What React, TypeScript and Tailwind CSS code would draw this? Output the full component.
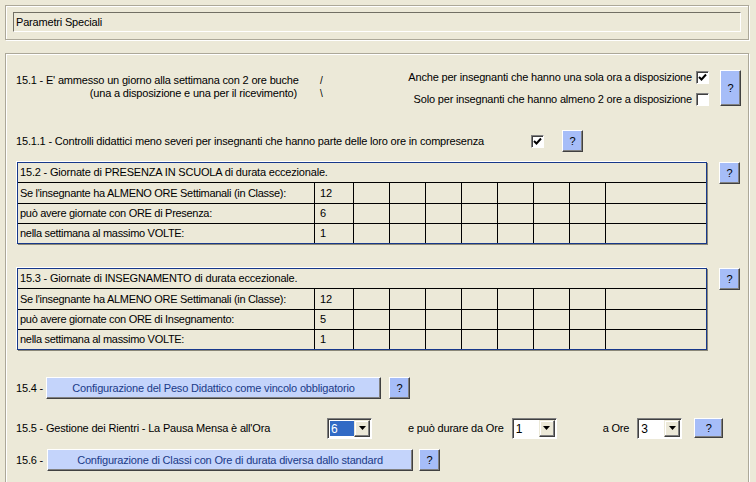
import React from 'react';

const FONT = { fontFamily: '"Liberation Sans", Arial, sans-serif' };

function HelpButton({ className = '' }: { className?: string }) {
  return (
    <div
      className={`flex items-center justify-center border border-t-white border-l-white border-r-[#404040] border-b-[#404040] bg-[#a6bdf8] text-[11px] text-black shadow-[inset_-1px_-1px_0_#808080] ${className}`}
    >
      ?
    </div>
  );
}

function CheckBox({ checked }: { checked?: boolean }) {
  return (
    <div className="flex h-[13px] w-[13px] shrink-0 items-center justify-center border border-t-[#808080] border-l-[#808080] border-r-white border-b-white bg-white shadow-[inset_1px_1px_0_#404040]">
      {checked && (
        <svg width="9" height="9" viewBox="0 0 9 9">
          <path d="M1 4 L3.5 6.5 L8 1.5" stroke="#000" strokeWidth="2" fill="none" />
        </svg>
      )}
    </div>
  );
}

function Combo({ value, selected, className = '' }: { value: string; selected?: boolean; className?: string }) {
  return (
    <div
      className={`flex h-[21px] border border-t-[#808080] border-l-[#808080] border-r-white border-b-white bg-white shadow-[inset_1px_1px_0_#404040] ${className}`}
    >
      <div className="flex flex-1 items-center pl-[2px] pt-[1px]">
        <span
          className={`flex h-[15px] items-center px-[1px] text-[12px] leading-none ${
            selected ? 'w-full bg-[#316ac5] text-white' : 'text-black'
          }`}
        >
          {value}
        </span>
      </div>
      <div className="my-[1px] mr-[1px] flex w-[16px] items-center justify-center border border-t-[#ece9d8] border-l-[#ece9d8] border-r-[#404040] border-b-[#404040] bg-[#ece9d8] shadow-[inset_-1px_-1px_0_#808080,inset_1px_1px_0_#fff]">
        <svg width="7" height="4" viewBox="0 0 7 4">
          <path d="M0 0 H7 L3.5 4 Z" fill="#000" />
        </svg>
      </div>
    </div>
  );
}

function BigButton({ label, className = '' }: { label: string; className?: string }) {
  return (
    <div
      className={`flex h-[22px] items-center justify-center whitespace-nowrap border border-t-white border-l-white border-r-[#404040] border-b-[#404040] bg-[#c4d4fb] text-[11px] text-[#1a3a88] shadow-[inset_-1px_-1px_0_#808080] ${className}`}
    >
      {label}
    </div>
  );
}

const CELLS = [0, 1, 2, 3, 4, 5, 6];

function ExceptionTable({ title, rows }: { title: string; rows: [string, string][] }) {
  return (
    <div className="flex items-start">
      <div className="ml-[1px] w-[690px] border border-[#17388a] shadow-[-1px_-1px_0_#fff,1px_1px_0_#8a8778]">
        <div className="flex h-[20px] items-center border-b border-black pl-[2px]">{title}</div>
        {rows.map(([label, value], i) => (
          <div key={i} className={`flex h-[20px] ${i > 0 ? 'border-t border-black' : ''}`}>
            <div className="flex w-[297px] items-center border-r border-black pl-[2px] tracking-[-0.3px]">{label}</div>
            <div className="flex w-[39px] items-center border-r border-black pl-[5px]">{value}</div>
            {CELLS.map((c) => (
              <div key={c} className="w-[36px] border-r border-black" />
            ))}
            <div className="flex-1" />
          </div>
        ))}
      </div>
      <HelpButton className="ml-[12px] h-[22px] w-[21px]" />
    </div>
  );
}

export default function App() {
  return (
    <div
      className="h-[482px] w-[756px] overflow-hidden whitespace-nowrap bg-[#ece9d8] pt-[5px] text-[11px] tracking-[-0.18px] text-black"
      style={FONT}
    >
      {/* Header panel */}
      <div className="mx-[5px] h-[35px] w-[744px] border border-[#aca899] pl-[7px] pt-[6px] shadow-[inset_1px_1px_0_#fff,1px_1px_0_#fff]">
        <div className="flex h-[20px] w-[728px] items-center border border-t-[#716f64] border-l-[#716f64] border-r-white border-b-white pl-[2px]">
          Parametri Speciali
        </div>
      </div>

      {/* Main panel */}
      <div className="mx-[5px] mt-[13px] h-[440px] w-[744px] border border-[#aca899] pl-[10px] pt-[16px] shadow-[inset_1px_1px_0_#fff,1px_1px_0_#fff]">
        {/* 15.1 */}
        <div className="flex h-[36px] items-start">
          <div className="mt-[4px] w-[281px] text-right leading-[13px]">
            <div>15.1 - E' ammesso un giorno alla settimana con 2 ore buche</div>
            <div>(una a disposizione e una per il ricevimento)</div>
          </div>
          <div className="ml-[23px] mt-[4px] text-[10px] leading-[13px]">
            <div>/</div>
            <div>\</div>
          </div>
          <div className="flex-1" />
          <div className="mt-[1px] flex flex-col items-end gap-[9px] leading-[13px]">
            <div className="flex items-center gap-[4px]">
              <span>Anche per insegnanti che hanno una sola ora a disposizione</span>
              <CheckBox checked />
            </div>
            <div className="flex items-center gap-[4px]">
              <span>Solo per insegnanti che hanno almeno 2 ore a disposizione</span>
              <CheckBox />
            </div>
          </div>
          <HelpButton className="ml-[11px] mr-[7px] h-[36px] w-[21px]" />
        </div>

        {/* 15.1.1 */}
        <div className="mt-[24px] flex h-[22px] items-center">
          <span className="w-[515px]">
            15.1.1 - Controlli didattici meno severi per insegnanti che hanno parte delle loro ore in compresenza
          </span>
          <CheckBox checked />
          <HelpButton className="ml-[18px] h-[22px] w-[21px]" />
        </div>

        <div className="mt-[10px]">
          <ExceptionTable
            title="15.2 - Giornate di PRESENZA IN SCUOLA di durata eccezionale."
            rows={[
              ['Se l\'insegnante ha ALMENO ORE Settimanali (in Classe):', '12'],
              ['può avere giornate con ORE di Presenza:', '6'],
              ['nella settimana al massimo VOLTE:', '1'],
            ]}
          />
        </div>

        <div className="mt-[24px]">
          <ExceptionTable
            title="15.3 - Giornate di INSEGNAMENTO di durata eccezionale."
            rows={[
              ['Se l\'insegnante ha ALMENO ORE Settimanali (in Classe):', '12'],
              ['può avere giornate con ORE di Insegnamento:', '5'],
              ['nella settimana al massimo VOLTE:', '1'],
            ]}
          />
        </div>

        {/* 15.4 */}
        <div className="mt-[27px] flex h-[22px] items-center">
          <span className="w-[30px]">15.4 -</span>
          <BigButton label="Configurazione del Peso Didattico come vincolo obbligatorio" className="w-[335px]" />
          <HelpButton className="ml-[8px] h-[22px] w-[21px]" />
        </div>

        {/* 15.5 */}
        <div className="mt-[18px] flex h-[22px] items-center">
          <span className="w-[311px]">15.5 - Gestione dei Rientri - La Pausa Mensa è all'Ora</span>
          <Combo value="6" selected className="w-[45px]" />
          <span className="ml-[36px]">e può durare da Ore</span>
          <Combo value="1" className="ml-[8px] w-[45px]" />
          <span className="ml-[46px]">a Ore</span>
          <Combo value="3" className="ml-[8px] w-[45px]" />
          <HelpButton className="ml-[12px] h-[20px] w-[29px]" />
        </div>

        {/* 15.6 */}
        <div className="mt-[10px] flex h-[22px] items-center">
          <span className="w-[31px]">15.6 -</span>
          <BigButton label="Configurazione di Classi con Ore di durata diversa dallo standard" className="w-[366px]" />
          <HelpButton className="ml-[6px] h-[22px] w-[21px]" />
        </div>
      </div>
    </div>
  );
}
